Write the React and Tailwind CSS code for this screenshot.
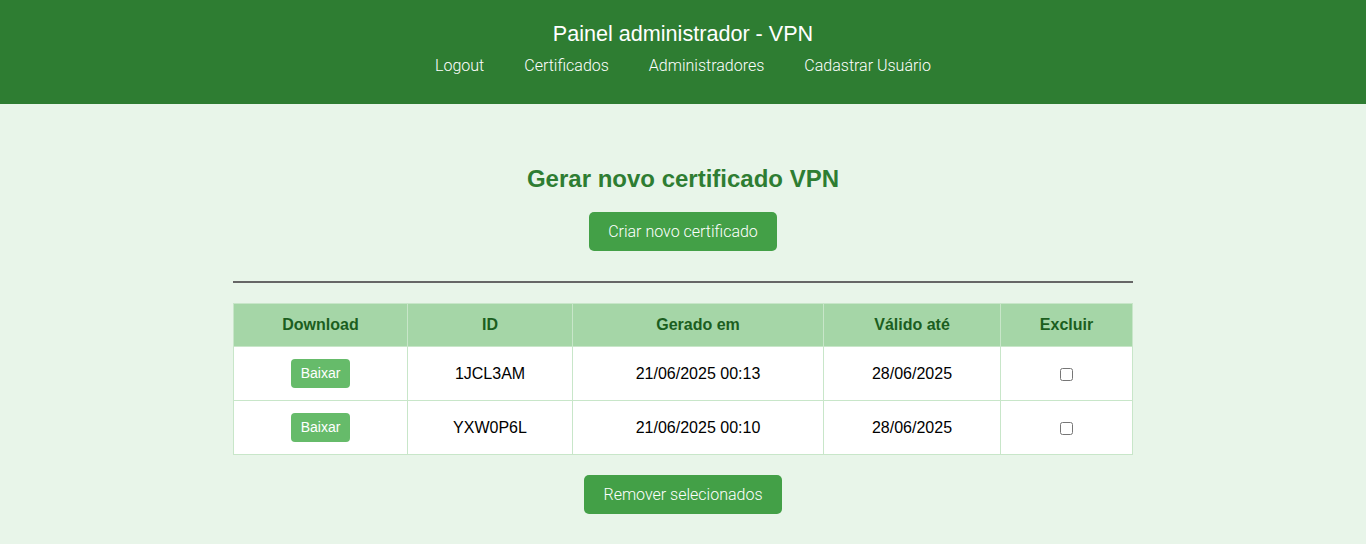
import { useState } from 'react';

const certs = [
  { id: '1JCL3AM', created: '21/06/2025 00:13', valid: '28/06/2025' },
  { id: 'YXW0P6L', created: '21/06/2025 00:10', valid: '28/06/2025' },
];

export default function App() {
  const [selected, setSelected] = useState([]);

  const toggle = (id) => {
    setSelected(prev => prev.includes(id) ? prev.filter(x => x !== id) : [...prev, id]);
  };

  return (
    <div className="min-h-[544px] bg-[#e8f5e9] font-['Liberation_Sans',Arial,sans-serif]">

      {/* HEADER */}
      <header className="bg-[#2e7d32] text-white text-center pt-[21px] h-[104px]">
        <h1 className="text-[21.6px] leading-[25px]">Painel administrador - VPN</h1>
        <nav className="flex justify-center gap-[40px] mt-[10px] text-[16px] leading-[20px] font-['Roboto',sans-serif] font-light">
          <a href="#">Logout</a>
          <a href="#">Certificados</a>
          <a href="#">Administradores</a>
          <a href="#">Cadastrar Usuário</a>
        </nav>
      </header>

      {/* CONTEUDO */}
      <main className="w-[900px] mx-auto pt-[61px] pb-[30px] text-center">
        <h2 className="text-[24px] leading-[28px] font-bold text-[#2e7d32]">Gerar novo certificado VPN</h2>
        <button className="mt-[19px] h-[39px] px-[19px] rounded-[5px] bg-[#43a047] text-white text-[16px] font-['Roboto',sans-serif] font-light">
          Criar novo certificado
        </button>

        <hr className="mt-[30px] border-0 border-t-2 border-[#666]" />

        <table className="mt-[20px] w-full border-collapse bg-white text-[16px] text-black">
          <thead>
            <tr className="bg-[#a5d6a7] text-[#1b5e20] font-bold h-[43px]">
              <th className="w-[174px] border border-[#c8e6c9]">Download</th>
              <th className="w-[165px] border border-[#c8e6c9]">ID</th>
              <th className="w-[251px] border border-[#c8e6c9]">Gerado em</th>
              <th className="w-[177px] border border-[#c8e6c9]">Válido até</th>
              <th className="border border-[#c8e6c9]">Excluir</th>
            </tr>
          </thead>
          <tbody>
            {certs.map(c => (
              <tr key={c.id} className="h-[54px]">
                <td className="border border-[#c8e6c9]">
                  <button className="h-[29px] px-[10px] rounded-[4px] bg-[#66bb6a] text-white text-[14px]">Baixar</button>
                </td>
                <td className="border border-[#c8e6c9]">{c.id}</td>
                <td className="border border-[#c8e6c9]">{c.created}</td>
                <td className="border border-[#c8e6c9]">{c.valid}</td>
                <td className="border border-[#c8e6c9]">
                  <input type="checkbox" checked={selected.includes(c.id)} onChange={() => toggle(c.id)} className="w-[13px] h-[13px] align-middle" />
                </td>
              </tr>
            ))}
          </tbody>
        </table>

        <button className="mt-[20px] h-[39px] px-[19px] rounded-[5px] bg-[#43a047] text-white text-[16px] font-['Roboto',sans-serif] font-light">
          Remover selecionados
        </button>
      </main>
    </div>
  );
}
